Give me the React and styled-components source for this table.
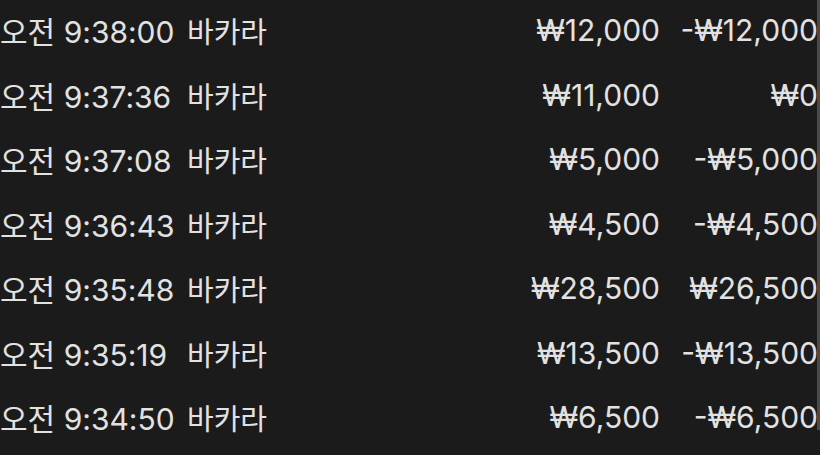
import React from 'react';
import styled, { createGlobalStyle } from 'styled-components';

const GlobalStyle = createGlobalStyle`
  html, body {
    margin: 0;
    padding: 0;
    background: #1b1b1b;
  }
  body {
    width: 820px;
    height: 455px;
    overflow: hidden;
  }
`;

const Screen = styled.div`
  position: relative;
  width: 820px;
  height: 455px;
  background: #1b1b1b;
  color: #e2e2e2;
  font-family: Inter, "Noto Sans CJK KR", sans-serif;
  font-size: 30px;
  overflow: hidden;
`;

const List = styled.div`
  display: flex;
  flex-direction: column;
  padding-right: 2px;
`;

const Row = styled.div`
  box-sizing: border-box;
  display: grid;
  grid-template-columns: 172px auto 1fr 158px;
  align-items: center;
  height: 64.5px;
  padding-bottom: 4px;
  white-space: nowrap;
`;

const Time = styled.span``;

const Game = styled.span`
  padding-left: 15px;
  font-size: 29px;
`;

const Amount = styled.span`
  text-align: right;
`;

const ScrollThumb = styled.div`
  position: absolute;
  top: 0;
  right: 0;
  width: 3px;
  height: 430px;
  background: #4a4a4a;
`;

const rows = [
  { time: '오전 9:38:00', game: '바카라', bet: '₩12,000', result: '-₩12,000' },
  { time: '오전 9:37:36', game: '바카라', bet: '₩11,000', result: '₩0' },
  { time: '오전 9:37:08', game: '바카라', bet: '₩5,000', result: '-₩5,000' },
  { time: '오전 9:36:43', game: '바카라', bet: '₩4,500', result: '-₩4,500' },
  { time: '오전 9:35:48', game: '바카라', bet: '₩28,500', result: '₩26,500' },
  { time: '오전 9:35:19', game: '바카라', bet: '₩13,500', result: '-₩13,500' },
  { time: '오전 9:34:50', game: '바카라', bet: '₩6,500', result: '-₩6,500' },
];

export default function App() {
  return (
    <>
      <GlobalStyle />
      <Screen>
        <List>
          {rows.map((r, i) => (
            <Row key={i}>
              <Time>{r.time}</Time>
              <Game>{r.game}</Game>
              <Amount>{r.bet}</Amount>
              <Amount>{r.result}</Amount>
            </Row>
          ))}
        </List>
        <ScrollThumb />
      </Screen>
    </>
  );
}
